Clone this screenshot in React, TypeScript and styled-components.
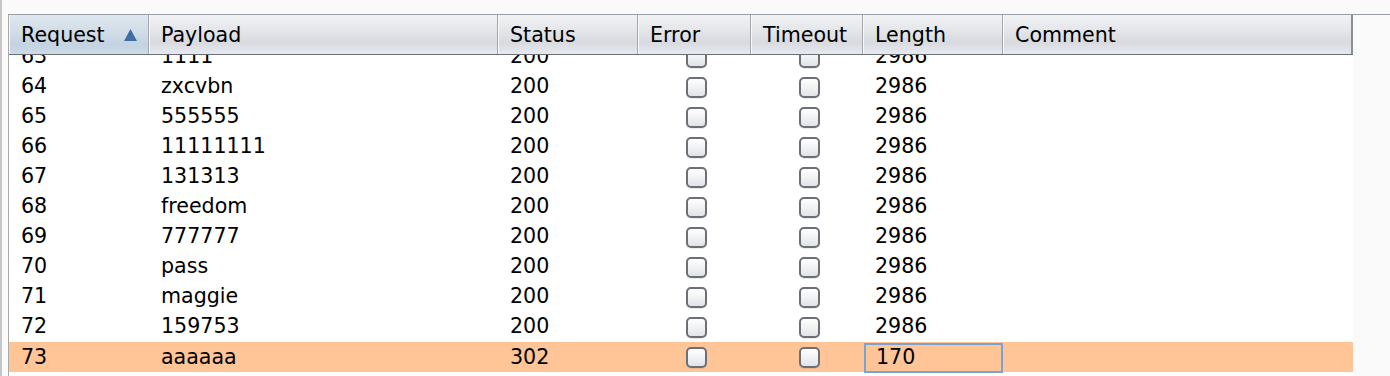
import React from 'react';
import styled, { createGlobalStyle } from 'styled-components';

type Result = {
	request: number,
	payload: string,
	status: number,
	length: number,
	selected?: boolean,
};

const results: Result[] = [
	{ request: 63, payload: '1111', status: 200, length: 2986 },
	{ request: 64, payload: 'zxcvbn', status: 200, length: 2986 },
	{ request: 65, payload: '555555', status: 200, length: 2986 },
	{ request: 66, payload: '11111111', status: 200, length: 2986 },
	{ request: 67, payload: '131313', status: 200, length: 2986 },
	{ request: 68, payload: 'freedom', status: 200, length: 2986 },
	{ request: 69, payload: '777777', status: 200, length: 2986 },
	{ request: 70, payload: 'pass', status: 200, length: 2986 },
	{ request: 71, payload: 'maggie', status: 200, length: 2986 },
	{ request: 72, payload: '159753', status: 200, length: 2986 },
	{ request: 73, payload: 'aaaaaa', status: 302, length: 170, selected: true },
];

const columns = '140px 349px 140px 113px 112px 140px 350px';

const GlobalStyle = createGlobalStyle`
	html, body {
		margin: 0;
		padding: 0;
		background: #fafafa;
	}
`;

const Page = styled.div`
	width: 1390px;
	height: 376px;
	box-sizing: border-box;
	background: #fafafa;
	border-left: 2px solid #c6c6c6;
	padding: 14px 0 0 6px;
	overflow: hidden;
	font-family: 'DejaVu Sans', 'Liberation Sans', sans-serif;
	font-size: 20.6px;
	color: #000;
`;

const Frame = styled.div`
	display: flex;
	height: 100%;
	border-top: 1px solid #9a9ea6;
	border-left: 1px solid #a9a9a9;
`;

const Table = styled.div`
	width: 1344px;
	display: flex;
	flex-direction: column;
	background: #ffffff;
`;

const HeaderRow = styled.div`
	display: grid;
	grid-template-columns: ${columns};
	height: 39px;
	border-bottom: 1px solid #6d7077;
	background: linear-gradient(#f1f2f4 0%, #e2e4e8 45%, #d8dadf 70%, #e6e9f0 100%);
`;

const HeaderCell = styled.div<{ $sorted?: boolean; $last?: boolean }>`
	display: flex;
	align-items: center;
	justify-content: space-between;
	padding: 0 11px 0 12px;
	box-sizing: border-box;
	border-right: ${(p) => (p.$last ? '2px solid #8b8e95' : '1px solid #a4a7ad')};
	box-shadow: inset 1px 0 0 #f7f8fa;
	background: ${(p) =>
		p.$sorted
			? 'linear-gradient(#dfe7ef 0%, #cfdbe6 50%, #c3d3e1 75%, #ccdaea 100%)'
			: 'transparent'};
`;

const SortArrow = styled.svg`
	width: 13px;
	height: 12px;
	display: block;
`;

const Body = styled.div`
	flex: 1;
	overflow: hidden;
`;

const RowList = styled.div`
	margin-top: -13px;
`;

const Row = styled.div<{ $selected?: boolean }>`
	display: grid;
	grid-template-columns: ${columns};
	height: 30px;
	background: ${(p) => (p.$selected ? '#ffc597' : '#ffffff')};
`;

const Cell = styled.div<{ $focused?: boolean }>`
	display: flex;
	align-items: center;
	padding-left: ${(p) => (p.$focused ? '10px' : '12px')};
	padding-bottom: 2px;
	box-sizing: border-box;
	white-space: nowrap;
	border: ${(p) => (p.$focused ? '2px solid #78a3d3' : 'none')};
	margin: ${(p) => (p.$focused ? '1px 0 0 1px' : '0')};
`;

const CheckCell = styled.div`
	display: flex;
	align-items: center;
	justify-content: center;
	padding-left: 4px;
`;

const CheckBox = styled.span`
	width: 17px;
	height: 17px;
	border: 2px solid #6c6f75;
	border-radius: 5px;
	background: linear-gradient(#ffffff 0%, #f1f2f4 50%, #e1e3e7 100%);
	box-shadow: 0 1px 0 rgba(0, 0, 0, 0.08);
`;

const Side = styled.div`
	flex: 1;
	background: #fafafa;
`;

const headers = ['Request', 'Payload', 'Status', 'Error', 'Timeout', 'Length', 'Comment'];

export default function App() {
	return (
		<>
			<GlobalStyle />
			<Page>
				<Frame>
					<Table>
						<HeaderRow>
							{headers.map((h, i) => (
								<HeaderCell key={h} $sorted={i === 0} $last={i === headers.length - 1}>
									<span>{h}</span>
									{i === 0 && (
										<SortArrow viewBox="0 0 13 12">
											<polygon points="6.5,0 13,12 0,12" fill="#3e6ea6" />
										</SortArrow>
									)}
								</HeaderCell>
							))}
						</HeaderRow>
						<Body>
							<RowList>
								{results.map((r) => (
									<Row key={r.request} $selected={r.selected}>
										<Cell>{r.request}</Cell>
										<Cell>{r.payload}</Cell>
										<Cell>{r.status}</Cell>
										<CheckCell>
											<CheckBox />
										</CheckCell>
										<CheckCell>
											<CheckBox />
										</CheckCell>
										<Cell $focused={r.selected}>{r.length}</Cell>
										<Cell />
									</Row>
								))}
							</RowList>
						</Body>
					</Table>
					<Side />
				</Frame>
			</Page>
		</>
	);
}
